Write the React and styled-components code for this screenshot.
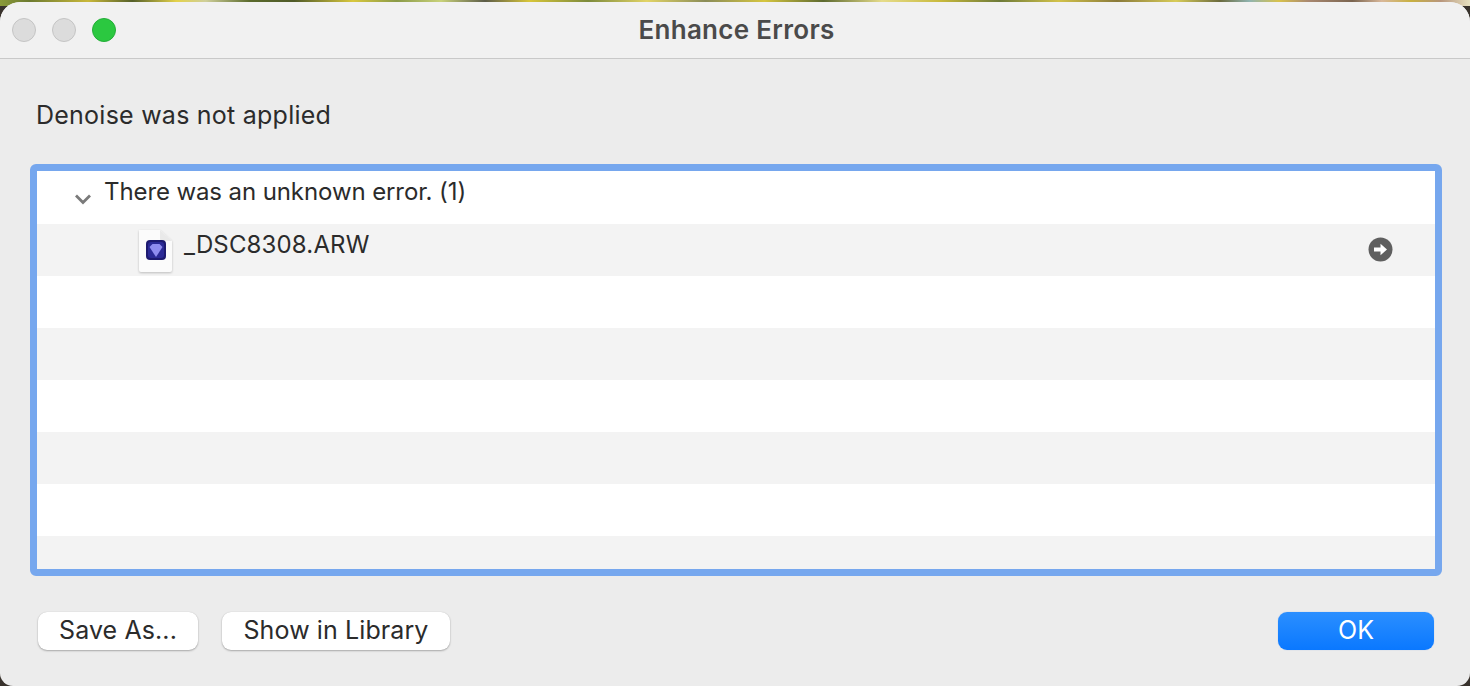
import React from "react";
import styled, { createGlobalStyle } from "styled-components";

const Global = createGlobalStyle`
html, body { margin: 0; padding: 0; height: 100%; overflow: hidden; }
#root { height: 100%; }
`;

// wallpaper shows only along the top edge and in the bottom corners
const Desktop = styled.div`
  width: 1470px;
  height: 686px;
  padding-top: 2px;
  box-sizing: border-box;
  background-color: #38322c;
  background-image: linear-gradient(90deg, #8a9a3a 0%, #6c7a30 2%, #c9b83a 6%, #55602a 9%, #e4d24a 12%, #cfcf9a 14%, #5a6a2c 17%, #4f5a28 20%, #d9c83e 24%, #8a9a48 27%, #c9d27a 30%, #5c5c48 33%, #d8c63a 36%, #7c8a3c 40%, #e2d466 44%, #8a8c58 48%, #d6c640 52%, #5d6a30 56%, #e6dc8a 60%, #c8b93c 64%, #6d7a38 68%, #d2c24a 72%, #8a7a3a 76%, #d8cc58 80%, #6a6a3e 83%, #90b4b0 85%, #d8c24c 87%, #a98870 89%, #7a6450 92%, #d9b89a 94%, #c8b040 96%, #b8967c 98%, #e6e0c0 100%);
  background-size: 100% 6px;
  background-repeat: no-repeat;
`;

const Window = styled.div`
  height: 684px;
  display: flex;
  flex-direction: column;
  background: #ececec;
  border-radius: 20px 20px 13px 13px;
  overflow: hidden;
  font-family: Inter, "Liberation Sans", sans-serif;
  color: #2b2b2b;
`;

const TitleBar = styled.div`
  position: relative;
  flex: none;
  height: 56px;
  display: flex;
  align-items: center;
  justify-content: center;
  background: #f1f1f1;
  border-bottom: 1px solid #c9c9c9;
`;

const Lights = styled.div`
  position: absolute;
  left: 12px;
  top: 16px;
  display: flex;
  gap: 16px;
`;

const Light = styled.span`
  width: 24px;
  height: 24px;
  box-sizing: border-box;
  border-radius: 50%;
  background: ${(p) => (p.$on ? "#2bc840" : "#dcdcdc")};
  border: 1px solid ${(p) => (p.$on ? "#24ad38" : "#c4c4c4")};
`;

const Title = styled.div`
  font-size: 26px;
  font-weight: 600;
  color: #4a4a4a;
  letter-spacing: 0.3px;
  margin: 0 0 2px 3px;
`;

const Body = styled.div`
  flex: 1;
  display: flex;
  flex-direction: column;
  padding: 0 28px 0 30px;
`;

const Message = styled.div`
  margin: 40px 0 0 6px;
  font-size: 25px;
  line-height: 32px;
  height: 32px;
  letter-spacing: 0.24px;
`;

const ListFrame = styled.div`
  margin-top: 33px;
  width: 1412px;
  height: 412px;
  box-sizing: border-box;
  border: 7px solid #76a7ee;
  border-radius: 6px;
  overflow: hidden;
  background: #fff;
`;

const Row = styled.div`
  height: ${(p) => p.$h || 52}px;
  display: flex;
  align-items: flex-start;
  background: ${(p) => (p.$alt ? "#f3f3f3" : "#fff")};
`;

const Chevron = styled.svg`
  width: 18px;
  height: 12px;
  margin: 22px 0 0 37px;
  flex: none;
`;

const GroupText = styled.span`
  margin: 5px 0 0 12px;
  font-size: 24px;
  line-height: 32px;
  letter-spacing: -0.1px;
`;

const FileIcon = styled.svg`
  width: 38px;
  height: 46px;
  margin: 5px 0 0 99px;
  flex: none;
  overflow: visible;
  filter: drop-shadow(0 1px 1px rgba(0, 0, 0, 0.22));
`;

const FileName = styled.span`
  margin: 5px 0 0 10px;
  font-size: 24px;
  line-height: 32px;
  letter-spacing: 0.15px;
  flex: 1;
`;

const RevealIcon = styled.svg`
  width: 25px;
  height: 25px;
  margin: 13px 42px 0 0;
  flex: none;
`;

const Actions = styled.div`
  margin-top: 36px;
  padding: 0 8px;
  display: flex;
  gap: 24px;
`;

const Button = styled.button`
  height: 38px;
  width: ${(p) => p.$w}px;
  padding: 0 0 2px;
  border: none;
  border-radius: 9px;
  font-family: inherit;
  font-size: 25px;
  line-height: 34px;
  letter-spacing: 0.1px;
  color: ${(p) => (p.$primary ? "#fff" : "#2b2b2b")};
  background: ${(p) => (p.$primary ? "linear-gradient(180deg, #2b8fff 0%, #0a78ff 100%)" : "#fff")};
  box-shadow: ${(p) => (p.$primary ? "0 0 1px rgba(0,90,220,.4)" : "0 1px 2px rgba(0,0,0,.28), 0 0 1px rgba(0,0,0,.16)")};
  &:last-child { margin-left: auto; }
`;

function App() {
  const rows = [3, 4, 5, 6, 7, 8];
  return (
    <Desktop>
      <Global />
      <Window>
        <TitleBar>
          <Lights>
            <Light />
            <Light />
            <Light $on />
          </Lights>
          <Title>Enhance Errors</Title>
        </TitleBar>
        <Body>
          <Message>Denoise was not applied</Message>
          <ListFrame>
            <Row $h={53}>
              <Chevron viewBox="0 0 18 12">
                <path d="M2 2.5 L9 9.5 L16 2.5" fill="none" stroke="#7a7a7a" strokeWidth="2.8" />
              </Chevron>
              <GroupText>There was an unknown error. (1)</GroupText>
            </Row>
            <Row $alt>
              <FileIcon viewBox="0 0 38 46">
                <path d="M3 1 H24 L36 12 V41 a2 2 0 0 1 -2 2 H5 a2 2 0 0 1 -2 -2 Z" fill="#fbfbfb" />
                <path d="M24 1 L36 12 H26 a2 2 0 0 1 -2 -2 Z" fill="#e9e9e9" />
                <rect x="10" y="11" width="20" height="20" rx="4" fill="#1d1a70" />
                <rect x="12" y="13" width="16" height="16" rx="3" fill="#2b2a96" />
                <path d="M13.5 18 L16.5 15 H23.5 L26.5 18 L20 28 Z" fill="#8f8cf0" />
              </FileIcon>
              <FileName>_DSC8308.ARW</FileName>
              <RevealIcon viewBox="0 0 25 25">
                <circle cx="12.5" cy="12.5" r="12" fill="#5f5f5f" />
                <path d="M6 10.6 H12.5 V6.8 L19 12.5 L12.5 18.2 V14.4 H6 Z" fill="#fff" />
              </RevealIcon>
            </Row>
            {rows.map((n) => (
              <Row key={n} $alt={n % 2 === 0} />
            ))}
          </ListFrame>
          <Actions>
            <Button $w={160}>Save As...</Button>
            <Button $w={228}>Show in Library</Button>
            <Button $w={156} $primary>OK</Button>
          </Actions>
        </Body>
      </Window>
    </Desktop>
  );
}

export default App;
